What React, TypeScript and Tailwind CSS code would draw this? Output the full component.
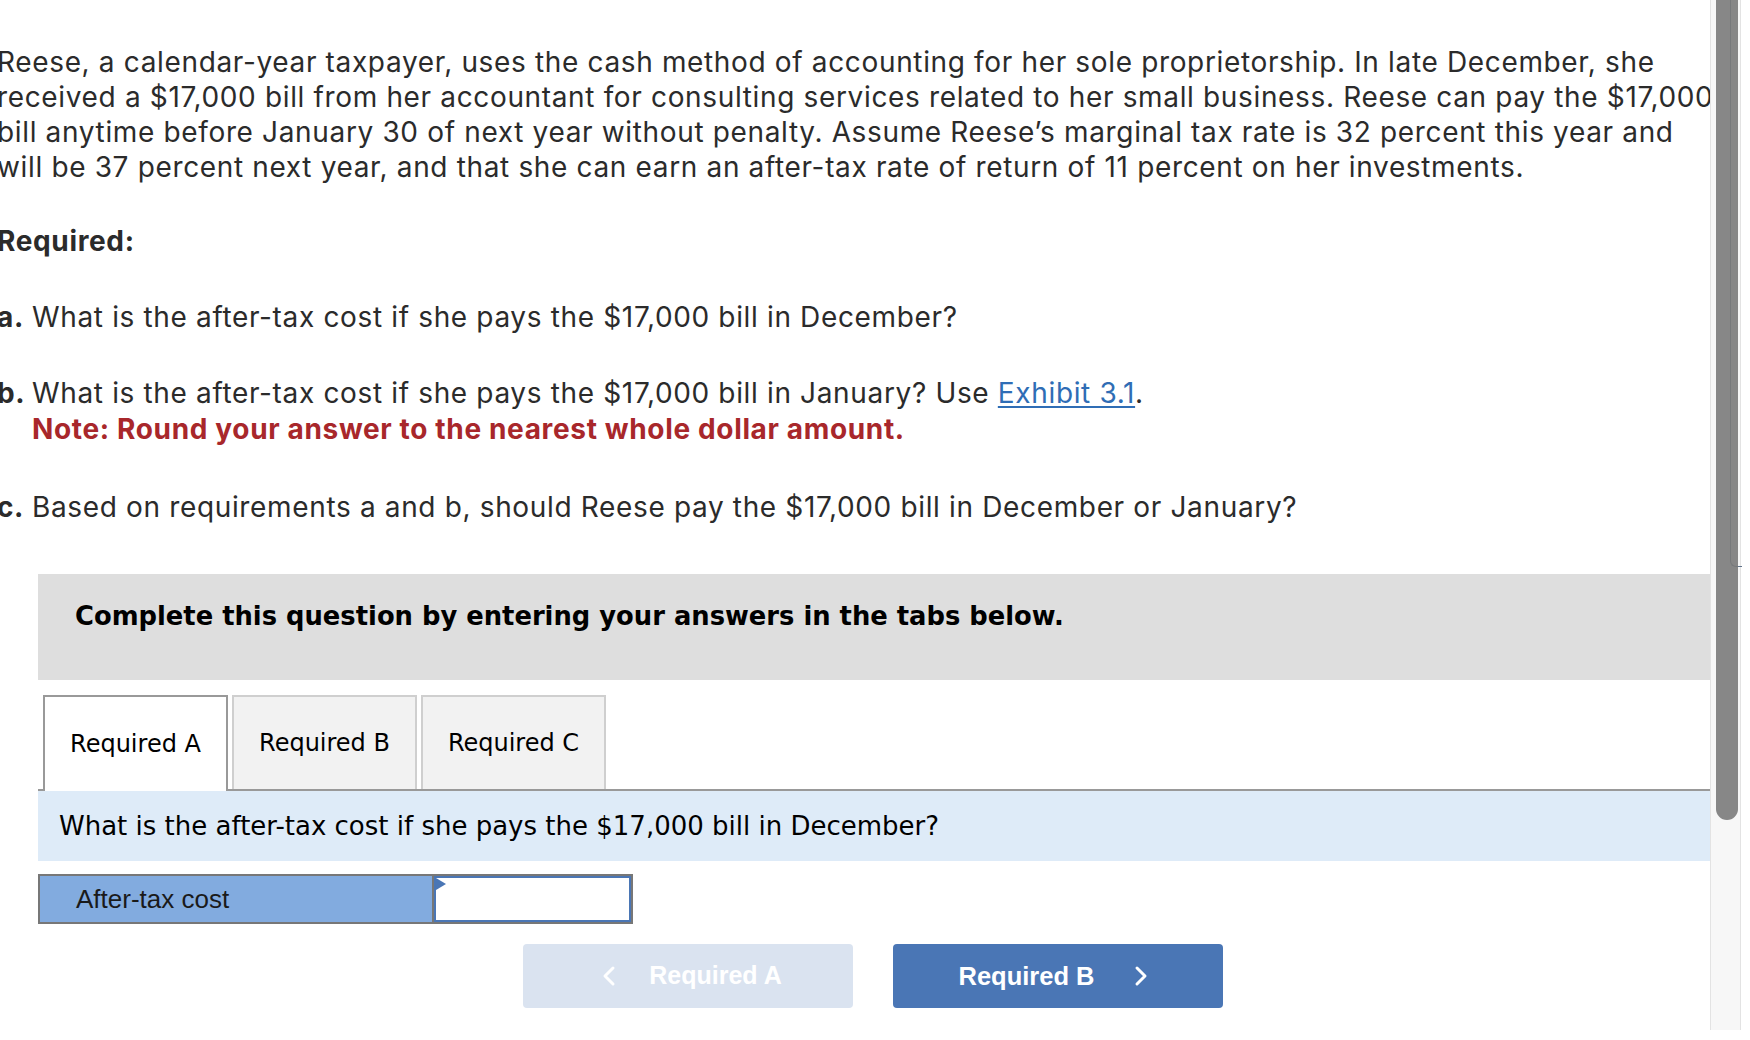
import React from 'react';
import { ChevronLeft, ChevronRight } from 'lucide-react';

const intro = [
  'Reese, a calendar-year taxpayer, uses the cash method of accounting for her sole proprietorship. In late December, she',
  'received a $17,000 bill from her accountant for consulting services related to her small business. Reese can pay the $17,000',
  'bill anytime before January 30 of next year without penalty. Assume Reese’s marginal tax rate is 32 percent this year and',
  'will be 37 percent next year, and that she can earn an after-tax rate of return of 11 percent on her investments.',
];

const tabs = ['Required A', 'Required B', 'Required C'];

const body = { fontFamily: 'Inter, "Open Sans", sans-serif' };
const verdana = { fontFamily: '"DejaVu Sans", Verdana, sans-serif' };
const arial = { fontFamily: '"Liberation Sans", Arial, sans-serif' };

const App = () => {
  return (
    <div className="relative w-[1750px] h-[1040px] overflow-hidden bg-white">
      <div className="w-[1710px]">
        {/* question text */}
        <div className="-ml-[3px] text-[28px] tracking-[0.65px] text-[#2b2b2b]" style={body}>
          <div className="pt-[45px] leading-[35px] whitespace-nowrap">
            {intro.map((line) => (
              <div key={line}>{line}</div>
            ))}
          </div>
          <div className="mt-[39px] leading-[35px] font-bold">Required:</div>
          <div className="mt-[41px] flex leading-[35px]">
            <span className="w-[35px] font-bold">a.</span>
            <span>What is the after-tax cost if she pays the $17,000 bill in December?</span>
          </div>
          <div className="mt-[40px] flex leading-[36px]">
            <span className="w-[35px] font-bold">b.</span>
            <div>
              <div>
                What is the after-tax cost if she pays the $17,000 bill in January? Use{' '}
                <span className="text-[#2f6db5] underline underline-offset-[3px]">Exhibit 3.1</span>.
              </div>
              <div className="font-bold text-[#a8272b]">Note: Round your answer to the nearest whole dollar amount.</div>
            </div>
          </div>
          <div className="mt-[43px] flex leading-[35px]">
            <span className="w-[35px] font-bold">c.</span>
            <span>Based on requirements a and b, should Reese pay the $17,000 bill in December or January?</span>
          </div>
        </div>

        {/* answer panel */}
        <div className="ml-[38px] mt-[49px]">
          <div className="h-[106px] bg-[#dedede] pl-[37px] pt-[26px]">
            <div className="text-[25.8px] font-bold leading-[32px] text-black" style={verdana}>
              Complete this question by entering your answers in the tabs below.
            </div>
          </div>

          <div className="mt-[15px] flex gap-[4px] border-b-2 border-[#999] pl-[5px]" style={verdana}>
            {tabs.map((t, i) => (
              <div
                key={t}
                className={
                  i === 0
                    ? '-mb-[2px] flex h-[96px] w-[185px] items-center justify-center border-2 border-b-0 border-[#999] bg-white text-[24px] text-black'
                    : 'flex h-[94px] w-[185px] items-center justify-center border-2 border-b-0 border-[#cfcfcf] bg-[#f2f2f2] text-[24px] text-black'
                }
              >
                {t}
              </div>
            ))}
          </div>

          <div className="flex h-[70px] items-center bg-[#deebf8] pl-[21px] text-[26px] text-black" style={verdana}>
            What is the after-tax cost if she pays the $17,000 bill in December?
          </div>

          <div className="mt-[13px] flex h-[50px] w-[595px] border-2 border-[#777]" style={arial}>
            <div className="flex w-[394px] items-center border-r-2 border-[#777] bg-[#82abdf] pl-[36px] text-[26px] text-[#1a1a1a]">
              After-tax cost
            </div>
            <div className="relative flex-1 border-2 border-[#4a76b5] bg-white">
              <svg className="absolute left-0 top-0" width="10" height="12" viewBox="0 0 10 12">
                <polygon points="0,0 10,6 0,12" fill="#4a76b5" />
              </svg>
            </div>
          </div>

          <div className="mt-[20px] flex justify-center gap-[40px] pr-[3px]" style={arial}>
            <div className="flex h-[64px] w-[330px] items-center justify-center gap-[24px] rounded-[4px] bg-[#dae3f0] text-[25px] font-bold text-white">
              <ChevronLeft size={32} strokeWidth={2.25} />
              <span>Required A</span>
            </div>
            <div className="flex h-[64px] w-[330px] items-center justify-center gap-[30px] rounded-[4px] bg-[#4a76b5] text-[25.5px] font-bold text-white">
              <span>Required B</span>
              <ChevronRight size={32} strokeWidth={2.25} />
            </div>
          </div>
        </div>
      </div>

      {/* scrollbar */}
      <div className="absolute left-[1710px] top-0 h-[1030px] w-[31px] border-x border-[#e3e3e3] bg-[#f7f7f7]">
        <div className="absolute left-[19px] top-0 h-[567px] w-[12px] rounded-bl-[6px] border-b-[1.5px] border-l-[1.5px] border-[#5f7189]" />
        <div className="absolute left-[5px] -top-[20px] h-[840px] w-[22px] rounded-full bg-[#7a7a7a]/90" />
      </div>
    </div>
  );
};

export default App;
